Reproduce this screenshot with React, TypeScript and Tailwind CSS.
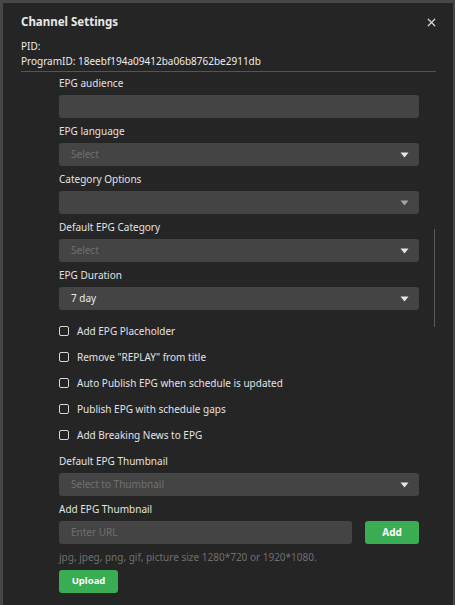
import { X } from 'lucide-react'

const FONT = { fontFamily: '"Noto Sans", "Open Sans", sans-serif' }

function Caret() {
  return (
    <svg width="9" height="6" viewBox="0 0 9 6" className="shrink-0">
      <path d="M0.5 0.5 L8.5 0.5 L4.5 5.5 Z" fill="#e6e6e6" />
    </svg>
  )
}

function Field({ label, children }: { label: string; children: React.ReactNode }) {
  return (
    <div className="flex flex-col">
      <div className="h-[16px] flex items-center text-[10px] text-[#e2e2e2]">{label}</div>
      <div className="mt-[4px] mb-[5px]">{children}</div>
    </div>
  )
}

function Select({ value, placeholder, dim }: { value?: string; placeholder?: string; dim?: boolean }) {
  return (
    <div className="h-[23px] rounded-[3px] bg-[#444444] flex items-center justify-between pl-[12px] pr-[10px]">
      {value ? (
        <span className="text-[10px] text-[#ececec]">{value}</span>
      ) : (
        <span className="text-[10px] text-[#707070]">{placeholder}</span>
      )}
      <span className={dim ? 'opacity-60' : ''}>
        <Caret />
      </span>
    </div>
  )
}

function Check({ label }: { label: string }) {
  return (
    <label className="h-[26px] flex items-center gap-[8px] text-[10px] text-[#e2e2e2]">
      <span className="w-[10px] h-[10px] rounded-[2px] border border-[#d8d8d8] shrink-0" />
      {label}
    </label>
  )
}

export default function App() {
  return (
    <div className="w-[455px] h-[605px] bg-[#474747] pt-[3px] pl-[3px] pr-[2px] overflow-hidden" style={FONT}>
      <div className="relative h-[602px] bg-[#252525] flex flex-col">
        {/* header */}
        <div className="px-[18px] pt-[10px]">
          <div className="flex items-center justify-between h-[18px]">
            <span className="text-[11.5px] font-bold text-[#e8e8e8]">Channel Settings</span>
            <X size={13} strokeWidth={2.2} className="text-[#dcdcdc] -mr-[3px]" />
          </div>
          <div className="mt-[8px] text-[10px] leading-[15px] text-[#ececec]">PID:</div>
          <div className="text-[10px] leading-[15px] text-[#ececec]">ProgramID: 18eebf194a09412ba06b8762be2911db</div>
          <div className="mt-[2px] h-px bg-[#555555] -mr-[1px]" />
        </div>

        {/* body */}
        <div className="pl-[56px] pr-[34px] pt-[3px]">
          <Field label="EPG audience">
            <div className="h-[23px] rounded-[3px] bg-[#444444]" />
          </Field>
          <Field label="EPG language">
            <Select placeholder="Select" />
          </Field>
          <Field label="Category Options">
            <Select dim />
          </Field>
          <Field label="Default EPG Category">
            <Select placeholder="Select" />
          </Field>
          <Field label="EPG Duration">
            <Select value="7 day" />
          </Field>

          <div className="mt-[3px] flex flex-col">
            <Check label="Add EPG Placeholder" />
            <Check label={'Remove "REPLAY" from title'} />
            <Check label="Auto Publish EPG when schedule is updated" />
            <Check label="Publish EPG with schedule gaps" />
            <Check label="Add Breaking News to EPG" />
          </div>

          <div className="mt-[5px]">
            <Field label="Default EPG Thumbnail">
              <Select placeholder="Select to Thumbnail" />
            </Field>
            <Field label="Add EPG Thumbnail">
              <div className="flex items-center gap-[13px]">
                <div className="flex-1 h-[23px] rounded-[3px] bg-[#444444] flex items-center pl-[12px] text-[10px] text-[#707070]">
                  Enter URL
                </div>
                <button className="w-[54px] h-[23px] rounded-[3px] bg-[#3aac54] text-[10px] font-bold text-white">
                  Add
                </button>
              </div>
            </Field>
            <div className="h-[16px] flex items-center text-[10px] text-[#6f6f6f]">
              jpg, jpeg, png, gif, picture size 1280*720 or 1920*1080.
            </div>
            <button className="mt-[5px] w-[59px] h-[23px] rounded-[3px] bg-[#3aac54] text-[9.5px] font-bold text-white">
              Upload
            </button>
          </div>
        </div>

        {/* scrollbar thumb */}
        <div className="absolute left-[431px] top-[226px] w-px h-[98px] bg-[#5a5a5a]" />
      </div>
    </div>
  )
}
